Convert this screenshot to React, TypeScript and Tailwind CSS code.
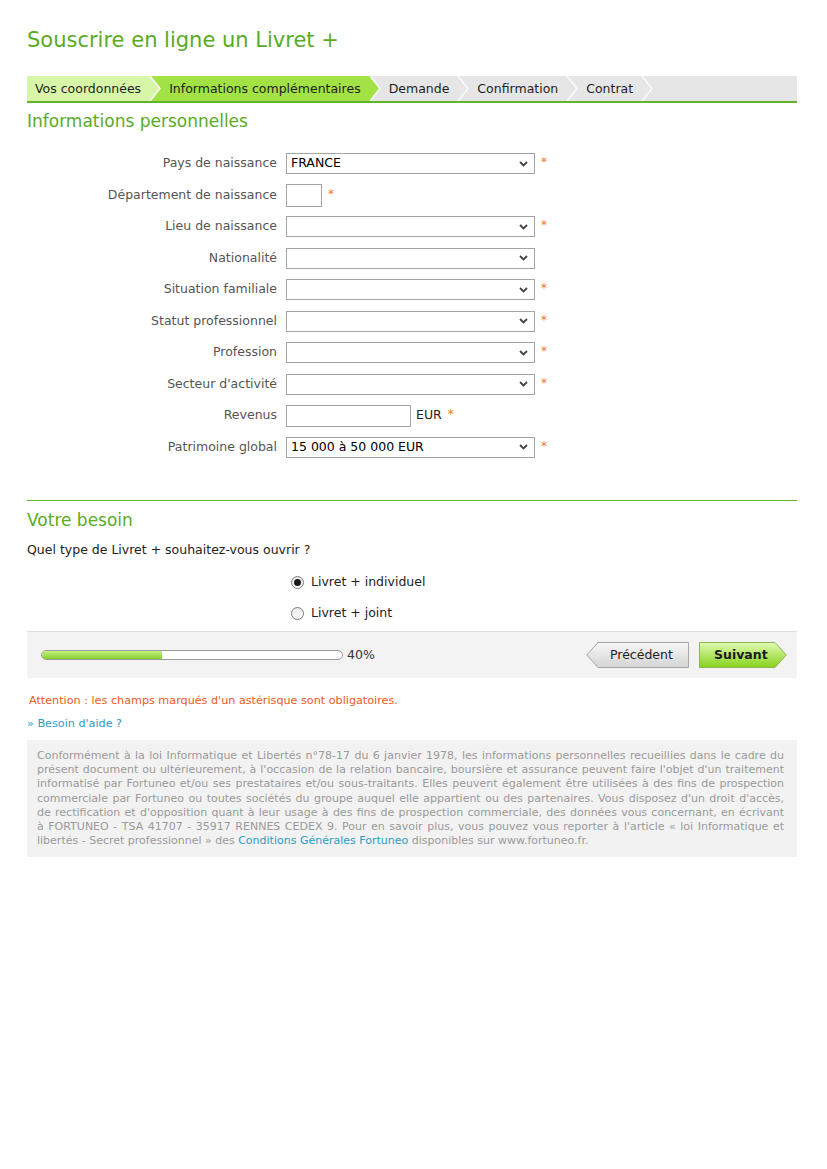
import { ReactNode } from "react";

const steps = [
  { label: "Vos coordonnées", fill: "#d8f6a7" },
  { label: "Informations complémentaires", fill: "#a3e244" },
  { label: "Demande", fill: "#e6e6e6" },
  { label: "Confirmation", fill: "#e6e6e6" },
  { label: "Contrat", fill: "#e6e6e6" },
];

// flèche entre deux étapes
function StepArrow({ fill, next }: { fill: string; next: string }) {
  return (
    <svg width="11" height="25" viewBox="0 0 11 25" className="block shrink-0">
      <rect x="0" y="0" width="11" height="25" fill={next} />
      <polygon points="0,0 10,12.5 0,25" fill={fill} />
      <polyline points="0,0 10,12.5 0,25" fill="none" stroke="#fafafa" strokeWidth="1.5" />
    </svg>
  );
}

function Chevron() {
  return (
    <svg width="9" height="6" viewBox="0 0 9 6" className="block">
      <polyline points="1,1 4.5,4.5 8,1" fill="none" stroke="#444" strokeWidth="1.8" />
    </svg>
  );
}

function Star() {
  return <span className="ml-[6px] mb-[3px] text-[12px] leading-none text-[#f07a1e]">*</span>;
}

function Select({ value }: { value?: string }) {
  return (
    <div className="flex h-[21px] w-[249px] items-center justify-between border border-[#a5a5a5] bg-white pl-[4px] pr-[6px] text-[12.5px] text-black">
      <span>{value}</span>
      <Chevron />
    </div>
  );
}

function Row({ label, children }: { label: string; children: ReactNode }) {
  return (
    <div className="flex h-[31.5px] items-center">
      <div className="w-[250px] text-right text-[#555]">{label}</div>
      <div className="ml-[9px] flex items-center">{children}</div>
    </div>
  );
}

function Radio({ checked, label }: { checked?: boolean; label: string }) {
  return (
    <div className="flex h-[31px] items-center pl-[264px]">
      <div className="flex h-[13px] w-[13px] items-center justify-center rounded-full border border-[#7a7a7a] bg-gradient-to-b from-[#e8e8e8] to-white">
        {checked && <div className="h-[7px] w-[7px] rounded-full bg-[#1a1a1a]" />}
      </div>
      <span className="ml-[7px] text-[#222]">{label}</span>
    </div>
  );
}

const legalLines = [
  "Conformément à la loi Informatique et Libertés n°78-17 du 6 janvier 1978, les informations personnelles recueillies dans le cadre du",
  "présent document ou ultérieurement, à l'occasion de la relation bancaire, boursière et assurance peuvent faire l'objet d'un traitement",
  "informatisé par Fortuneo et/ou ses prestataires et/ou sous-traitants. Elles peuvent également être utilisées à des fins de prospection",
  "commerciale par Fortuneo ou toutes sociétés du groupe auquel elle appartient ou des partenaires. Vous disposez d'un droit d'accès,",
  "de rectification et d'opposition quant à leur usage à des fins de prospection commerciale, des données vous concernant, en écrivant",
  "à FORTUNEO - TSA 41707 - 35917 RENNES CEDEX 9. Pour en savoir plus, vous pouvez vous reporter à l'article « loi Informatique et",
];

export default function App() {
  return (
    <div className="min-h-[1169px] bg-white font-['DejaVu_Sans',Verdana,sans-serif] text-[12.5px]">
      <div className="ml-[27px] w-[770px] pt-[28px]">
        <h1 className="text-[21px] leading-[25px] text-[#5aab1f]">Souscrire en ligne un Livret +</h1>

        {/* étapes */}
        <div className="mt-[23px] flex h-[27px] border-b-2 border-[#62b22a] bg-[#e6e6e6]">
          {steps.map((s, i) => (
            <div key={s.label} className="flex h-[25px]">
              <div
                className={`pl-[8px] pr-[9px] leading-[26px] text-[#1e1e1e] ${
                  i === 0 ? "bg-[#d8f6a7]" : i === 1 ? "bg-[#a3e244]" : "bg-[#e6e6e6]"
                }`}
              >
                {s.label}
              </div>
              <StepArrow fill={s.fill} next={steps[i + 1]?.fill ?? "#e6e6e6"} />
            </div>
          ))}
        </div>

        <h2 className="mt-[8px] text-[17px] leading-[20px] text-[#5aab1f]">Informations personnelles</h2>

        <div className="mt-[17px]">
          <Row label="Pays de naissance">
            <Select value="FRANCE" />
            <Star />
          </Row>
          <Row label="Département de naissance">
            <div className="h-[23px] w-[36px] border border-[#a5a5a5] bg-white" />
            <Star />
          </Row>
          <Row label="Lieu de naissance">
            <Select />
            <Star />
          </Row>
          <Row label="Nationalité">
            <Select />
          </Row>
          <Row label="Situation familiale">
            <Select />
            <Star />
          </Row>
          <Row label="Statut professionnel">
            <Select />
            <Star />
          </Row>
          <Row label="Profession">
            <Select />
            <Star />
          </Row>
          <Row label="Secteur d'activité">
            <Select />
            <Star />
          </Row>
          <Row label="Revenus">
            <div className="h-[22px] w-[125px] border border-[#a5a5a5] bg-white" />
            <span className="ml-[5px] text-[#222]">EUR</span>
            <Star />
          </Row>
          <Row label="Patrimoine global">
            <Select value="15 000 à 50 000 EUR" />
            <Star />
          </Row>
        </div>

        <div className="mt-[37px] border-t border-[#6cb52f]" />

        <h2 className="mt-[9px] text-[17px] leading-[20px] text-[#5aab1f]">Votre besoin</h2>
        <p className="mt-[12px] leading-[16px] text-[#222]">Quel type de Livret + souhaitez-vous ouvrir ?</p>

        <div className="mt-[9px]">
          <Radio checked label="Livret + individuel" />
          <Radio label="Livret + joint" />
        </div>

        {/* progression */}
        <div className="mt-[2px] flex h-[47px] items-center justify-between border-t border-[#dedede] bg-[#f3f3f3] pl-[14px] pr-[10px]">
          <div className="flex items-center">
            <div className="h-[10px] w-[302px] overflow-hidden rounded-full border border-[#9a9a9a] bg-white">
              <div className="h-full w-[40%] bg-gradient-to-b from-[#c6f07c] to-[#86cf25]" />
            </div>
            <span className="ml-[4px] text-[#333]">40%</span>
          </div>
          <div className="flex items-center gap-[10px]">
            <div className="relative h-[26px] w-[103px]">
              <svg width="103" height="26" viewBox="0 0 103 26" className="absolute inset-0">
                <defs>
                  <linearGradient id="gPrev" x1="0" y1="0" x2="0" y2="1">
                    <stop offset="0" stopColor="#f7f7f7" />
                    <stop offset="1" stopColor="#d4d4d4" />
                  </linearGradient>
                </defs>
                <path d="M0.8,13 L12,0.5 H102.5 V25.5 H12 Z" fill="url(#gPrev)" stroke="#a6a6a6" />
              </svg>
              <span className="relative block pl-[24px] leading-[26px] text-[#222]">Précédent</span>
            </div>
            <div className="relative h-[26px] w-[88px]">
              <svg width="88" height="26" viewBox="0 0 88 26" className="absolute inset-0">
                <defs>
                  <linearGradient id="gNext" x1="0" y1="0" x2="0" y2="1">
                    <stop offset="0" stopColor="#e2fbb2" />
                    <stop offset="1" stopColor="#86d21c" />
                  </linearGradient>
                </defs>
                <path d="M0.5,0.5 H76 L87.3,13 L76,25.5 H0.5 Z" fill="url(#gNext)" stroke="#8fb356" />
              </svg>
              <span className="relative block pl-[15px] font-bold leading-[26px] text-[#1a1a1a]">Suivant</span>
            </div>
          </div>
        </div>

        <p className="mt-[16px] pl-[2px] text-[11.2px] leading-[14px] text-[#ee5a1c]">
          Attention : les champs marqués d'un astérisque sont obligatoires.
        </p>
        <p className="mt-[9px] text-[11.2px] leading-[14px] text-[#2b9cc3]">» Besoin d'aide ?</p>

        <div className="mt-[9px] bg-[#f2f2f2] pb-[9px] pl-[10px] pr-[13px] pt-[9px] text-[11px] leading-[14.2px] text-[#9a9a9a]">
          {legalLines.map((l) => (
            <div key={l} className="whitespace-nowrap text-justify [text-align-last:justify]">
              {l}
            </div>
          ))}
          <div className="whitespace-nowrap">
            libertés - Secret professionnel » des <span className="text-[#2b9cc3]">Conditions Générales Fortuneo</span>{" "}
            disponibles sur www.fortuneo.fr.
          </div>
        </div>
      </div>
    </div>
  );
}
